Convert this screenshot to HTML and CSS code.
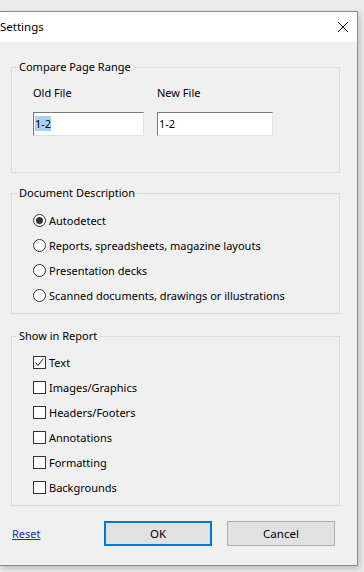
FILE: index.html
```html
<!DOCTYPE html>
<html lang="en">

<head>
	<meta charset="UTF-8">
	<title>Settings</title>
	<link rel="stylesheet" href="styles.css">
</head>

<body>
	<div class="window">
		<div class="titlebar">
			<span class="title">Settings</span>
			<svg class="close" width="12" height="12" viewBox="0 0 12 12">
				<path d="M1 1L11 11M11 1L1 11" stroke="#111" stroke-width="1" fill="none" />
			</svg>
		</div>
		<div class="content">
			<fieldset class="group group-range">
				<legend>Compare Page Range</legend>
				<div class="range-row">
					<div class="range-col">
						<label>Old File</label>
						<div class="edit edit-old"><span class="selected">1-2</span></div>
					</div>
					<div class="range-col">
						<label>New File</label>
						<div class="edit edit-new">1-2</div>
					</div>
				</div>
			</fieldset>

			<fieldset class="group group-desc">
				<legend>Document Description</legend>
				<div class="option"><span class="radio checked"></span>Autodetect</div>
				<div class="option"><span class="radio"></span>Reports, spreadsheets, magazine layouts</div>
				<div class="option"><span class="radio"></span>Presentation decks</div>
				<div class="option"><span class="radio"></span>Scanned documents, drawings or illustrations</div>
			</fieldset>

			<fieldset class="group group-report">
				<legend>Show in Report</legend>
				<div class="option">
					<span class="check">
						<svg width="11" height="11" viewBox="0 0 11 11">
							<path d="M1.5 5.5L4 8.5L9.5 1.5" stroke="#222" stroke-width="1" fill="none" />
						</svg>
					</span>Text
				</div>
				<div class="option"><span class="check"></span>Images/Graphics</div>
				<div class="option"><span class="check"></span>Headers/Footers</div>
				<div class="option"><span class="check"></span>Annotations</div>
				<div class="option"><span class="check"></span>Formatting</div>
				<div class="option"><span class="check"></span>Backgrounds</div>
			</fieldset>

			<div class="footer">
				<a href="#" class="reset">Reset</a>
				<div class="buttons">
					<button class="btn btn-default">OK</button>
					<button class="btn">Cancel</button>
				</div>
			</div>
		</div>
	</div>
</body>

</html>
```

FILE: styles.css
```css
body {
	margin: 0;
	background-color: #ebebeb;
	font-family: "Noto Sans", "Open Sans", sans-serif;
	font-size: 11px;
	color: #000;
	height: 572px;
	overflow: hidden;
}

.window {
	margin-top: 11px;
	margin-left: -1px;
	width: 357px;
	height: 553px;
	border: 1px solid #8a8a8a;
	background-color: #f0f0f0;
	box-shadow: 2px 3px 6px rgba(0, 0, 0, 0.18);
}

.titlebar {
	height: 30px;
	background-color: #fff;
	display: flex;
	align-items: center;
	justify-content: space-between;
	padding-right: 8px;
}

.title {
	font-size: 11.5px;
	line-height: 16px;
}

.close {
	display: block;
}

.content {
	padding: 0 17px 0 11px;
}

.group {
	margin: 0;
	padding: 0;
	border: 1px solid #dcdcdc;
	min-width: 0;
}

.group legend {
	padding: 0 2px;
	margin-left: -16px;
	line-height: 16px;
}

.group-range {
	margin-top: 17px;
	padding: 10px 0 36px 21px;
}

.range-row {
	display: flex;
	gap: 13px;
}

.range-col label {
	display: block;
	line-height: 16px;
	margin-bottom: 11px;
}

.edit {
	height: 24px;
	box-sizing: border-box;
	background-color: #fff;
	border: 1px solid #e3e3e3;
	border-top-color: #7a7a7a;
	border-left-color: #7a7a7a;
	padding: 3px 1px;
	line-height: 16px;
}

.edit-old {
	width: 111px;
}

.edit-new {
	width: 116px;
}

.selected {
	background-color: #a9d1f5;
}

.group-desc {
	margin-top: 12px;
	padding: 7px 0 5px 21px;
}

.group-report {
	margin-top: 14px;
	padding: 6px 0 5px 21px;
}

.option {
	height: 25px;
	display: flex;
	align-items: center;
}

.radio {
	width: 13px;
	height: 13px;
	box-sizing: border-box;
	border: 1px solid #333;
	border-radius: 50%;
	margin-right: 3px;
	background-color: #fff;
	display: flex;
	align-items: center;
	justify-content: center;
}

.radio.checked::after {
	content: "";
	width: 7px;
	height: 7px;
	border-radius: 50%;
	background-color: #333;
}

.check {
	width: 13px;
	height: 13px;
	box-sizing: border-box;
	border: 1px solid #333;
	margin-right: 3px;
	background-color: #fff;
	display: flex;
	align-items: center;
	justify-content: center;
}

.check svg {
	display: block;
}

.footer {
	display: flex;
	align-items: center;
	justify-content: space-between;
	margin-top: 15px;
	padding: 0 5px 0 1px;
}

.reset {
	color: #1a2fb5;
	text-decoration: underline;
}

.buttons {
	display: flex;
	gap: 15px;
}

.btn {
	width: 108px;
	height: 25px;
	box-sizing: border-box;
	font-family: inherit;
	font-size: 11.5px;
	background-color: #e1e1e1;
	border: 1px solid #adadad;
	padding: 0;
	color: #000;
}

.btn-default {
	border: 2px solid #0078d7;
}
```
